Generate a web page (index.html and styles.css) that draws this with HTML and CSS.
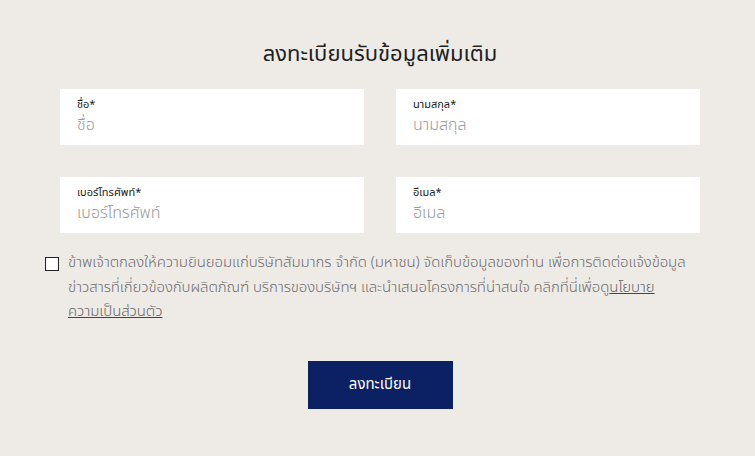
FILE: index.html
```html
<!DOCTYPE html>
<html lang="th">
<head>
<meta charset="utf-8">
<link rel="stylesheet" href="styles.css">
</head>
<body>
<main class="page">
  <h1 class="title">ลงทะเบียนรับข้อมูลเพิ่มเติม</h1>
  <form class="form">
    <div class="grid">
      <label class="field">
        <span class="field-label">ชื่อ*</span>
        <input class="field-input" type="text" placeholder="ชื่อ">
      </label>
      <label class="field">
        <span class="field-label">นามสกุล*</span>
        <input class="field-input" type="text" placeholder="นามสกุล">
      </label>
      <label class="field">
        <span class="field-label">เบอร์โทรศัพท์*</span>
        <input class="field-input" type="text" placeholder="เบอร์โทรศัพท์">
      </label>
      <label class="field">
        <span class="field-label">อีเมล*</span>
        <input class="field-input" type="text" placeholder="อีเมล">
      </label>
    </div>
    <div class="consent">
      <span class="checkbox"></span>
      <p class="consent-text">ข้าพเจ้าตกลงให้ความยินยอมแก่บริษัทสัมมากร จำกัด (มหาชน) จัดเก็บข้อมูลของท่าน เพื่อการติดต่อแจ้งข้อมูล ข่าวสารที่เกี่ยวข้องกับผลิตภัณฑ์ บริการของบริษัทฯ และนำเสนอโครงการที่น่าสนใจ คลิกที่นี่เพื่อดู<a class="link" href="#">นโยบาย <span class="nowrap">ความเป็นส่วนตัว</span></a></p>
    </div>
    <div class="actions">
      <button class="submit" type="button">ลงทะเบียน</button>
    </div>
  </form>
</main>
</body>
</html>
```

FILE: styles.css
```css
* { box-sizing: border-box; }
html, body {
  margin: 0;
  padding: 0;
}
body {
  background: #eeebe7;
  font-family: "Noto Sans Thai", "Noto Sans", "DejaVu Sans", sans-serif;
  color: #222;
  width: 755px;
  height: 456px;
  overflow: hidden;
}
.page {
  padding: 40px 55px 0 60px;
}
.title {
  margin: 0;
  text-align: center;
  font-size: 22px;
  font-weight: 400;
  line-height: 30px;
  color: #1f1f1f;
}
.form {
  margin-top: 19px;
}
.grid {
  display: grid;
  grid-template-columns: 304px 304px;
  column-gap: 32px;
  row-gap: 32px;
}
.field {
  display: flex;
  flex-direction: column;
  background: #fff;
  height: 56px;
  padding: 8px 17px 0;
}
.field-label {
  font-size: 11px;
  line-height: 16px;
  color: #222;
}
.field-input {
  border: 0;
  outline: 0;
  padding: 0;
  margin: 0;
  font-family: inherit;
  font-size: 16px;
  line-height: 24px;
  height: 24px;
  background: transparent;
  color: #222;
  font-weight: 300;
}
.field-input::placeholder {
  color: #9a9a9a;
}
.consent {
  display: flex;
  align-items: flex-start;
  gap: 9px;
  margin: 18px -14px 0 -15px;
}
.checkbox {
  flex: none;
  width: 14px;
  height: 14px;
  border: 1px solid #222;
  background: #fff;
  margin-top: 6px;
}
.consent-text {
  margin: 0;
  font-size: 15px;
  font-weight: 300;
  letter-spacing: -0.1px;
  line-height: 24.5px;
  color: #6e6e6e;
}
.link {
  color: #666;
  text-decoration: underline;
  text-decoration-color: #444;
}
.nowrap {
  white-space: nowrap;
}
.actions {
  display: flex;
  justify-content: center;
  margin-top: 36px;
}
.submit {
  width: 145px;
  height: 48px;
  border: 0;
  background: #0c2164;
  color: #fff;
  font-family: inherit;
  font-size: 15px;
}
```
